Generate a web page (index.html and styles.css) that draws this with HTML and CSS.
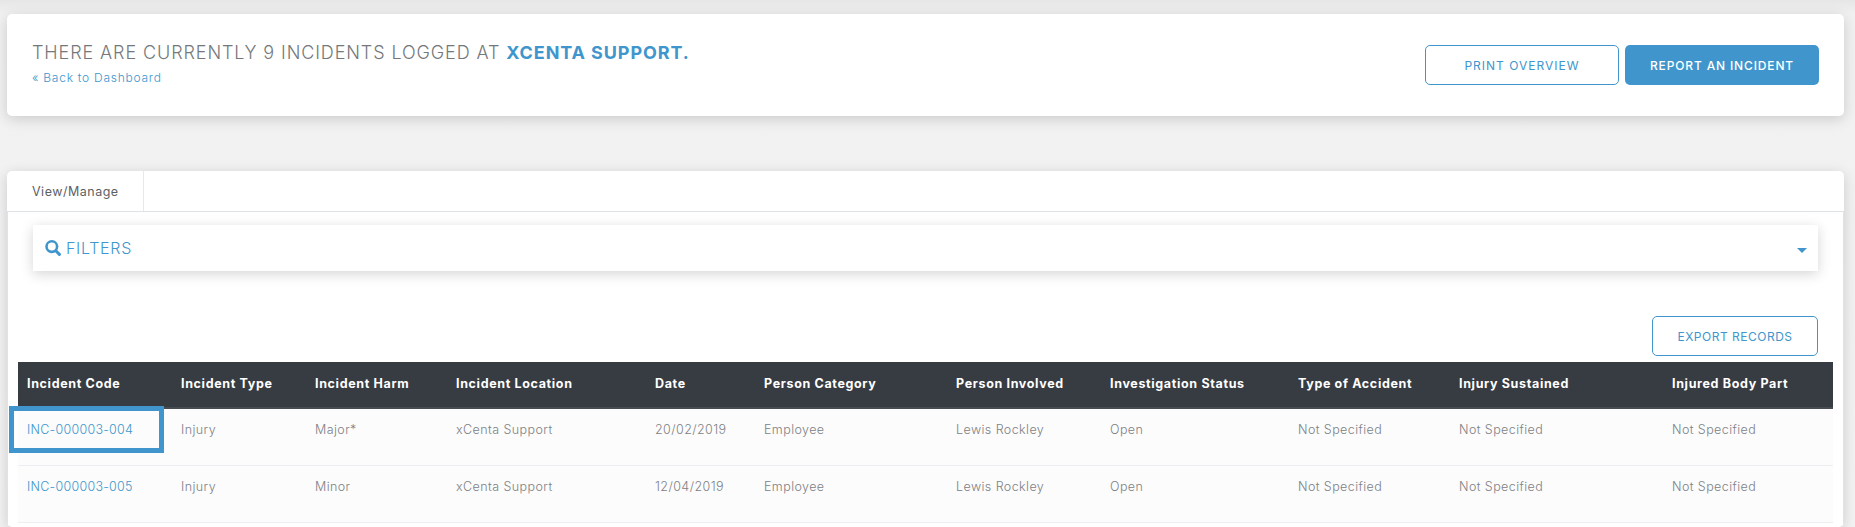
FILE: index.html
```html
<!DOCTYPE html>
<html lang="en">
<head>
<meta charset="utf-8">
<title>Incidents</title>
<link rel="stylesheet" href="styles.css">
</head>
<body>
<section class="card summary">
  <div class="summary-text">
    <h1 class="title">THERE ARE CURRENTLY 9 INCIDENTS LOGGED AT <strong>XCENTA SUPPORT.</strong></h1>
    <a class="back" href="#">« Back to Dashboard</a>
  </div>
  <div class="actions">
    <a class="btn btn-outline btn-print" href="#">PRINT OVERVIEW</a>
    <a class="btn btn-solid" href="#">REPORT AN INCIDENT</a>
  </div>
</section>
<section class="card panel">
  <div class="tabs"><div class="tab">View/Manage</div></div>
  <div class="panel-body">
    <div class="filters">
      <span class="filters-label">
        <svg class="search-icon" viewBox="0 0 16 16" width="16" height="16" aria-hidden="true"><circle cx="6.8" cy="6.6" r="5.3" fill="none" stroke="currentColor" stroke-width="2.6"/><path d="M10.8 10.8 14.4 14.4" fill="none" stroke="currentColor" stroke-width="3" stroke-linecap="round"/></svg>
        FILTERS
      </span>
      <svg class="caret" viewBox="0 0 10 5" width="10" height="5" aria-hidden="true"><path d="M0 0H10L5 5Z" fill="currentColor"/></svg>
    </div>
    <div class="export-row"><a class="btn btn-outline btn-export" href="#">EXPORT RECORDS</a></div>
    <table class="records">
      <colgroup>
        <col class="c1"><col class="c2"><col class="c3"><col class="c4"><col class="c5"><col class="c6"><col class="c7"><col class="c8"><col class="c9"><col class="c10"><col class="c11">
      </colgroup>
      <thead>
        <tr><th>Incident Code</th><th>Incident Type</th><th>Incident Harm</th><th>Incident Location</th><th>Date</th><th>Person Category</th><th>Person Involved</th><th>Investigation Status</th><th>Type of Accident</th><th>Injury Sustained</th><th>Injured Body Part</th></tr>
      </thead>
      <tbody>
        <tr><td class="code"><a href="#">INC-000003-004</a><span class="highlight"></span></td><td>Injury</td><td>Major*</td><td>xCenta Support</td><td>20/02/2019</td><td>Employee</td><td>Lewis Rockley</td><td>Open</td><td>Not Specified</td><td>Not Specified</td><td>Not Specified</td></tr>
        <tr><td class="code"><a href="#">INC-000003-005</a></td><td>Injury</td><td>Minor</td><td>xCenta Support</td><td>12/04/2019</td><td>Employee</td><td>Lewis Rockley</td><td>Open</td><td>Not Specified</td><td>Not Specified</td><td>Not Specified</td></tr>
      </tbody>
    </table>
  </div>
</section>
</body>
</html>
```
FILE: styles.css
```css
* { box-sizing: border-box; }
body {
  margin: 0;
  padding: 14px 11px 0 7px;
  height: 527px;
  overflow: hidden;
  background: linear-gradient(#e6e6e6 0, #f1f1f1 14px, #f3f3f3 100%);
  font-family: Inter, "Open Sans", sans-serif;
  font-weight: 300;
  color: #6a6e73;
}
a { text-decoration: none; color: #4096cc; }
.card {
  background: #fff;
  border-radius: 5px;
  box-shadow: 0 3px 14px rgba(0, 0, 0, .16);
}
.summary {
  height: 102px;
  display: flex;
  justify-content: space-between;
  padding: 31px 25px 0;
}
.title {
  margin: 0;
  font-size: 18px;
  line-height: 16px;
  font-weight: 300;
  letter-spacing: .9px;
  color: #74787b;
  white-space: nowrap;
}
.title strong { font-weight: 700; color: #4096cc; }
.back { display: block; margin-top: 9px; font-size: 12px; line-height: 16px; letter-spacing: .75px; }
.actions { display: flex; gap: 6px; }
.btn {
  display: flex;
  align-items: center;
  justify-content: center;
  height: 40px;
  width: 194px;
  border-radius: 5px;
  font-size: 12px;
  font-weight: 400;
  white-space: nowrap;
}
.btn-outline { border: 1px solid #4096cc; color: #4096cc; background: #fff; }
.btn-print { letter-spacing: 1px; }
.btn-solid { background: #4096cc; color: #fff; font-weight: 500; letter-spacing: .85px; }
.btn-export { width: 166px; letter-spacing: .5px; }
.panel { margin-top: 55px; height: 356px; overflow: hidden; }
.tabs { height: 41px; border-bottom: 1px solid #dfe2e8; }
.tab {
  width: 137px;
  height: 40px;
  padding: 13px 0 0 25px;
  border-right: 1px solid #e6e8ec;
  font-size: 12.5px;
  line-height: 16px;
  font-weight: 400;
  letter-spacing: .5px;
  color: #5c6065;
}
.panel-body {
  padding: 13px 10px 0;
  border-left: 1px solid #e2e2e2;
  border-right: 1px solid #e2e2e2;
  height: 315px;
}
.filters {
  margin: 0 15px 0 15px;
  height: 46px;
  padding: 0 11px 0 12px;
  display: flex;
  align-items: center;
  justify-content: space-between;
  background: #fff;
  box-shadow: 0 3px 12px rgba(0, 0, 0, .17);
  color: #4096cc;
}
.filters-label { display: flex; align-items: center; gap: 5px; font-size: 16px; font-weight: 300; letter-spacing: .7px; }
.search-icon { display: block; }
.caret { display: block; margin-top: 5px; }
.export-row { display: flex; justify-content: flex-end; margin-top: 45px; padding-right: 15px; }
.records {
  margin-top: 6px;
  width: 1815px;
  table-layout: fixed;
  border-collapse: collapse;
  background: #fcfcfc;
  font-size: 12.5px;
}
.c1 { width: 154px; } .c2 { width: 134px; } .c3 { width: 141px; } .c4 { width: 199px; }
.c5 { width: 109px; } .c6 { width: 192px; } .c7 { width: 154px; } .c8 { width: 188px; }
.c9 { width: 161px; } .c10 { width: 213px; } .c11 { width: 170px; }
.records th {
  height: 46px;
  padding: 0 9px 2px;
  text-align: left;
  background: #373b42;
  border-bottom: 2px solid #474c53;
  color: #fff;
  font-weight: 700;
  letter-spacing: .65px;
  white-space: nowrap;
}
.records td {
  height: 57px;
  padding: 13px 9px 0;
  vertical-align: top;
  line-height: 16px;
  border-bottom: 1px solid #eceef1;
  color: #7d8186;
  letter-spacing: .42px;
  white-space: nowrap;
}
.records .code { position: relative; letter-spacing: .25px; }
.highlight {
  position: absolute;
  left: -9px;
  top: -3px;
  width: 155px;
  height: 47px;
  border: 5px solid #4096cc;
  z-index: 1;
}
```
